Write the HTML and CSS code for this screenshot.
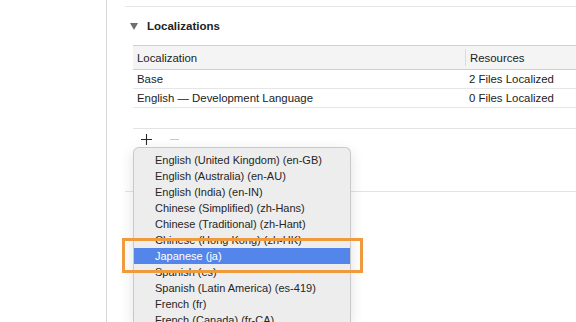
FILE: index.html
```html
<!DOCTYPE html>
<html>
<head>
<meta charset="utf-8">
<link rel="stylesheet" href="styles.css">
</head>
<body>
<div class="page">
  <div class="sidebar"></div>
  <div class="main">
    <div class="topline"></div>
    <div class="section-title">
      <svg class="disclosure" width="8" height="7" viewBox="0 0 8 7"><polygon points="0,0 8,0 4,7" fill="#6e6e6e"/></svg>
      <span>Localizations</span>
    </div>
    <div class="table">
      <div class="row head">
        <div class="c1">Localization</div>
        <div class="c2"><span class="sep"></span>Resources</div>
      </div>
      <div class="row">
        <div class="c1">Base</div>
        <div class="c2">2 Files Localized</div>
      </div>
      <div class="row">
        <div class="c1">English — Development Language</div>
        <div class="c2">0 Files Localized</div>
      </div>
    </div>
    <div class="toolbar">
      <svg class="plus" width="11" height="11" viewBox="0 0 11 11"><path d="M5.5 0V11M0 5.5H11" stroke="#2a2a2a" stroke-width="1.1" fill="none"/></svg>
      <span class="minus"></span>
    </div>
    <div class="lowerline"></div>
  </div>
</div>
<div class="menu">
  <div class="item">English (United Kingdom) (en-GB)</div>
  <div class="item">English (Australia) (en-AU)</div>
  <div class="item">English (India) (en-IN)</div>
  <div class="item">Chinese (Simplified) (zh-Hans)</div>
  <div class="item">Chinese (Traditional) (zh-Hant)</div>
  <div class="item">Chinese (Hong Kong) (zh-HK)</div>
  <div class="item selected">Japanese (ja)</div>
  <div class="item">Spanish (es)</div>
  <div class="item">Spanish (Latin America) (es-419)</div>
  <div class="item">French (fr)</div>
  <div class="item">French (Canada) (fr-CA)</div>
</div>
<div class="highlight-box"></div>
</body>
</html>
```
FILE: styles.css
```css
html, body {
  margin: 0;
  padding: 0;
  background: #ffffff;
}
body {
  width: 576px;
  height: 322px;
  overflow: hidden;
  position: relative;
  font-family: "Liberation Sans", Arial, sans-serif;
  font-size: 11.4px;
  color: #222;
}
.page {
  display: flex;
  height: 322px;
}
.sidebar {
  width: 106px;
  flex: none;
  border-right: 1px solid #d6d6d6;
}
.main {
  flex: 1;
  padding-left: 18px;
  display: flex;
  flex-direction: column;
}
.topline {
  height: 6px;
  border-bottom: 1px solid #e6e6e6;
  flex: none;
}
.section-title {
  height: 38px;
  display: flex;
  align-items: center;
  padding-left: 5px;
  flex: none;
  font-weight: bold;
  font-size: 11.5px;
  color: #222;
}
.disclosure {
  margin-right: 9px;
}
.table {
  margin-left: 8px;
  flex: none;
}
.row {
  display: flex;
  height: 18px;
  align-items: center;
  border-bottom: 1px solid #e6e6e6;
}
.row.head {
  height: 23px;
  background: #f4f4f4;
  border-top: 1px solid #cfcfcf;
  border-bottom: 1px solid #cfcfcf;
}
.c1 {
  width: 332px;
  padding-left: 4px;
  box-sizing: border-box;
}
.c2 {
  flex: 1;
  display: flex;
  align-items: center;
  padding-left: 4px;
}
.head .c2 {
  padding-left: 0;
}
.sep {
  width: 1px;
  height: 17px;
  background: #dcdcdc;
  margin-right: 4px;
}
.toolbar {
  margin-top: 20px;
  margin-left: 8px;
  border-top: 1px solid #e3e3e3;
  height: 20px;
  display: flex;
  align-items: center;
  flex: none;
}
.plus {
  margin-left: 8px;
  margin-top: 0;
}
.minus {
  width: 9px;
  height: 1px;
  background: #c8c8c8;
  margin-left: 18px;
  margin-top: 1px;
}
.lowerline {
  margin-top: 42px;
  border-top: 1px solid #e3e3e3;
  flex: none;
}
.menu {
  position: absolute;
  left: 133px;
  top: 147px;
  width: 218px;
  height: 175px;
  background: #ededed;
  border: 1px solid #c9c9c9;
  border-bottom: none;
  border-radius: 6px 6px 0 0;
  box-sizing: border-box;
  padding-top: 4px;
  box-shadow: 0 4px 14px rgba(0,0,0,0.12);
  overflow: hidden;
}
.item {
  height: 16px;
  line-height: 16px;
  padding-left: 21px;
  font-size: 11px;
  color: #262626;
  white-space: nowrap;
}
.item.selected {
  background: #5385eb;
  color: #ffffff;
}
.highlight-box {
  position: absolute;
  left: 122px;
  top: 238px;
  width: 241px;
  height: 35px;
  box-sizing: border-box;
  border: 3px solid #ef9a3c;
}
```
